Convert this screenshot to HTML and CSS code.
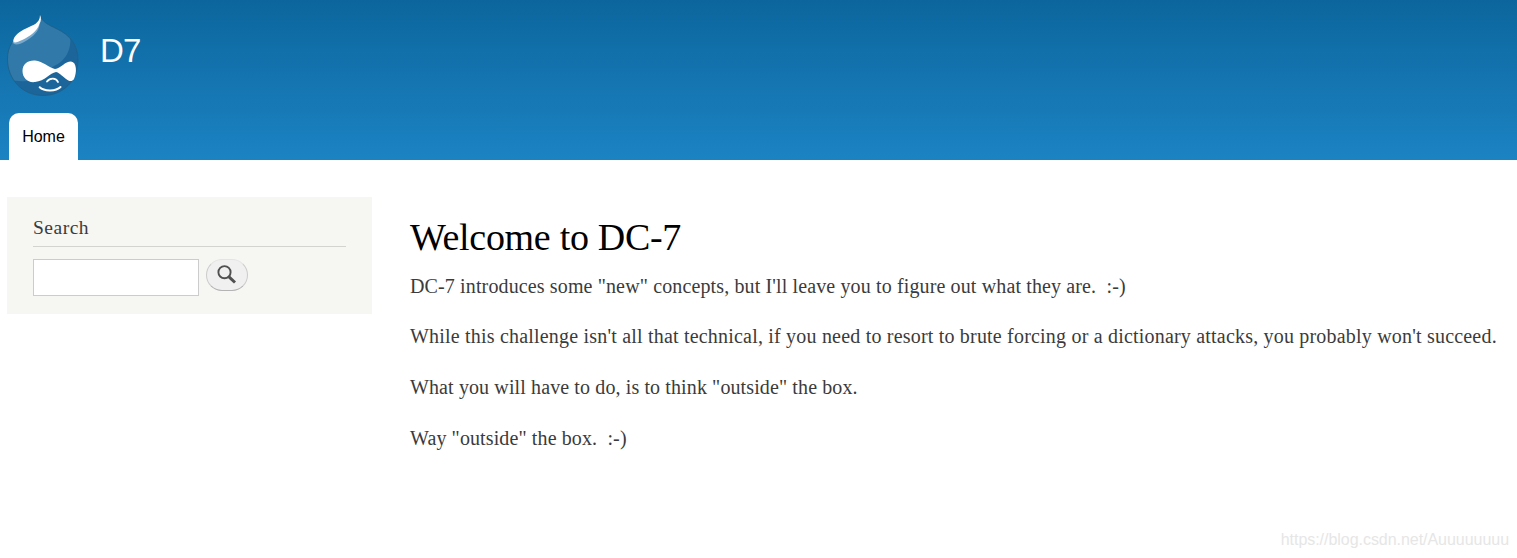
FILE: index.html
```
<!DOCTYPE html>
<html lang="en">
<head>
<meta charset="utf-8">
<title>Welcome to DC-7 | D7</title>
<link rel="stylesheet" href="styles.css">
</head>
<body>
<header class="header">
  <div class="branding">
    <svg class="logo" width="74" height="84" viewBox="6 14 74 84" aria-label="Home">
      <defs><clipPath id="drop"><path d="M40 14.500C42 22 47 24 57 29C70 35 78 45 78 60C78 81 63 95.500 43 95.500C22 95.500 7.500 79 7.500 59C7.500 46 14 38 23 32C33 25 41 24 40 14.500Z"/></clipPath></defs>
      <g clip-path="url(#drop)">
        <path fill="#3079a8" d="M6 14H80V98H6Z"/>
        <path fill="#1b659b" d="M70 36C72 50 65 61 54 66L34 80C25 82 16 81 8 80V98H80V36Z"/>
      </g>
      <path fill="none" stroke="#205b80" stroke-width=".7" d="M40 14.500C42 22 47 24 57 29C70 35 78 45 78 60C78 81 63 95.500 43 95.500C22 95.500 7.500 79 7.500 59C7.500 46 14 38 23 32"/>
      <path fill="#77a8cb" d="M12.500 42C13.500 45.500 19 45 25 41.500C33 37 39 31 39.500 25L41 20L39 22L24 38Z"/>
      <path fill="#fff" d="M40 15C41.500 18 41 21 39.500 23.500C38.500 26 38.500 27 36.500 29.500C31.500 35.500 24 39.500 18 41.800C14.500 43.200 12.500 42.500 13.500 39.500C15 35 20 31 26 28.500C33 25 40 23.500 40 15Z"/>
      <path fill="#fff" d="M22.500 71C22.500 64 28 60 35 60.500C43 61 49 68 55 69C61 68 65 61.500 71 61.500C77 62 77 73 74 79C72 82 69 81.500 66 79C61 75 59 72.500 56 72C50 73 45 81 35 82C28 83 22.500 78 22.500 71Z"/>
      <path fill="none" stroke="#fff" stroke-width="1.800" stroke-linecap="round" d="M47 81.500C50 77.500 56 77.500 58 82"/>
      <path fill="none" stroke="#fff" stroke-width="2" stroke-linecap="round" d="M39.700 87.300C44 91.500 56 91.500 60.500 87"/>
    </svg>
    <div class="site-name">D7</div>
  </div>
  <nav class="menu"><a class="tab">Home</a></nav>
</header>
<main class="main">
  <aside class="sidebar">
    <h2 class="block-title">Search</h2>
    <form class="search">
      <input class="search-input" type="text" aria-label="Search">
      <button class="search-button" type="button" aria-label="Search">
        <svg width="20" height="20" viewBox="0 0 20 20" fill="none" stroke="#505050"><circle cx="7.500" cy="7.200" r="6.100" stroke-width="1.900"/><path stroke-width="3" d="M12 11.800L18 17.500"/></svg>
      </button>
    </form>
  </aside>
  <article class="content">
    <h1 class="page-title">Welcome to DC-7</h1>
    <p class="intro">DC-7 introduces some "new" concepts, but I'll leave you to figure out what they are.&nbsp; :-)</p>
    <p class="challenge">While this challenge isn't all that technical, if you need to resort to brute forcing or a dictionary attacks, you probably won't succeed.</p>
    <p class="hint">What you will have to do, is to think "outside" the box.</p>
    <p class="hint">Way "outside" the box.&nbsp; :-)</p>
  </article>
</main>
<div class="watermark">https://blog.csdn.net/Auuuuuuuu</div>
</body>
</html>
```
FILE: styles.css
```
* { box-sizing: border-box; }
body {
  margin: 0;
  height: 558px;
  overflow: hidden;
  background: #fff;
  color: #3b3b3b;
  font-family: Georgia, "Liberation Serif", serif;
  font-size: 20px;
}
.header {
  height: 160px;
  display: flex;
  flex-direction: column;
  justify-content: space-between;
  background: linear-gradient(#0c669d, #1c83c3);
}
.branding { display: flex; padding: 14px 0 0 6px; }
.logo { flex: none; }
.site-name {
  margin: 18px 0 0 20px;
  color: #fff;
  font: 33px/38px "Liberation Sans", Arial, sans-serif;
  letter-spacing: -0.8px;
}
.menu { display: flex; padding-left: 9px; }
.tab {
  width: 69px;
  height: 47px;
  border-radius: 10px 10px 0 0;
  background: #fff;
  color: #000;
  font: 16px/47px "Liberation Sans", Arial, sans-serif;
  text-align: center;
}
.main { display: flex; padding: 37px 0 0 7px; gap: 38px; align-items: flex-start; }
.sidebar {
  flex: none;
  width: 365px;
  height: 117px;
  padding: 17px 26px 0;
  background: #f6f6f2;
}
.block-title {
  height: 33px;
  margin: 0 0 12px;
  border-bottom: 1px solid #d3d3d0;
  font-weight: 400;
  font-size: 19.500px;
  line-height: 27px;
  letter-spacing: .5px;
}
.search { display: flex; gap: 7px; align-items: flex-start; }
.search-input { width: 166px; height: 37px; border: 1px solid #ccc; background: #fff; }
.search-button {
  width: 42px;
  height: 32px;
  padding: 0 0 1px 10px;
  border: 1px solid #ccc;
  border-top-color: #e4e4e4;
  border-bottom-color: #b4b4b4;
  border-radius: 16px;
  background: #f0f0f0;
}
.search-button svg { display: block; }
.content { flex: 1; padding-top: 18px; white-space: nowrap; }
.content p { margin: 0 0 24.700px; line-height: 26px; }
.content .intro { letter-spacing: .13px; }
.content .challenge { letter-spacing: .197px; }
.content .hint { letter-spacing: .115px; }
.page-title {
  margin: 0 0 13.500px;
  color: #000;
  font-size: 38px;
  font-weight: 400;
  line-height: 44px;
  letter-spacing: -.3px;
}
.watermark {
  position: absolute;
  right: 8px;
  bottom: 8px;
  color: #e6e6e6;
  font: 16px/20px "Liberation Sans", Arial, sans-serif;
  letter-spacing: -.04px;
}
```
